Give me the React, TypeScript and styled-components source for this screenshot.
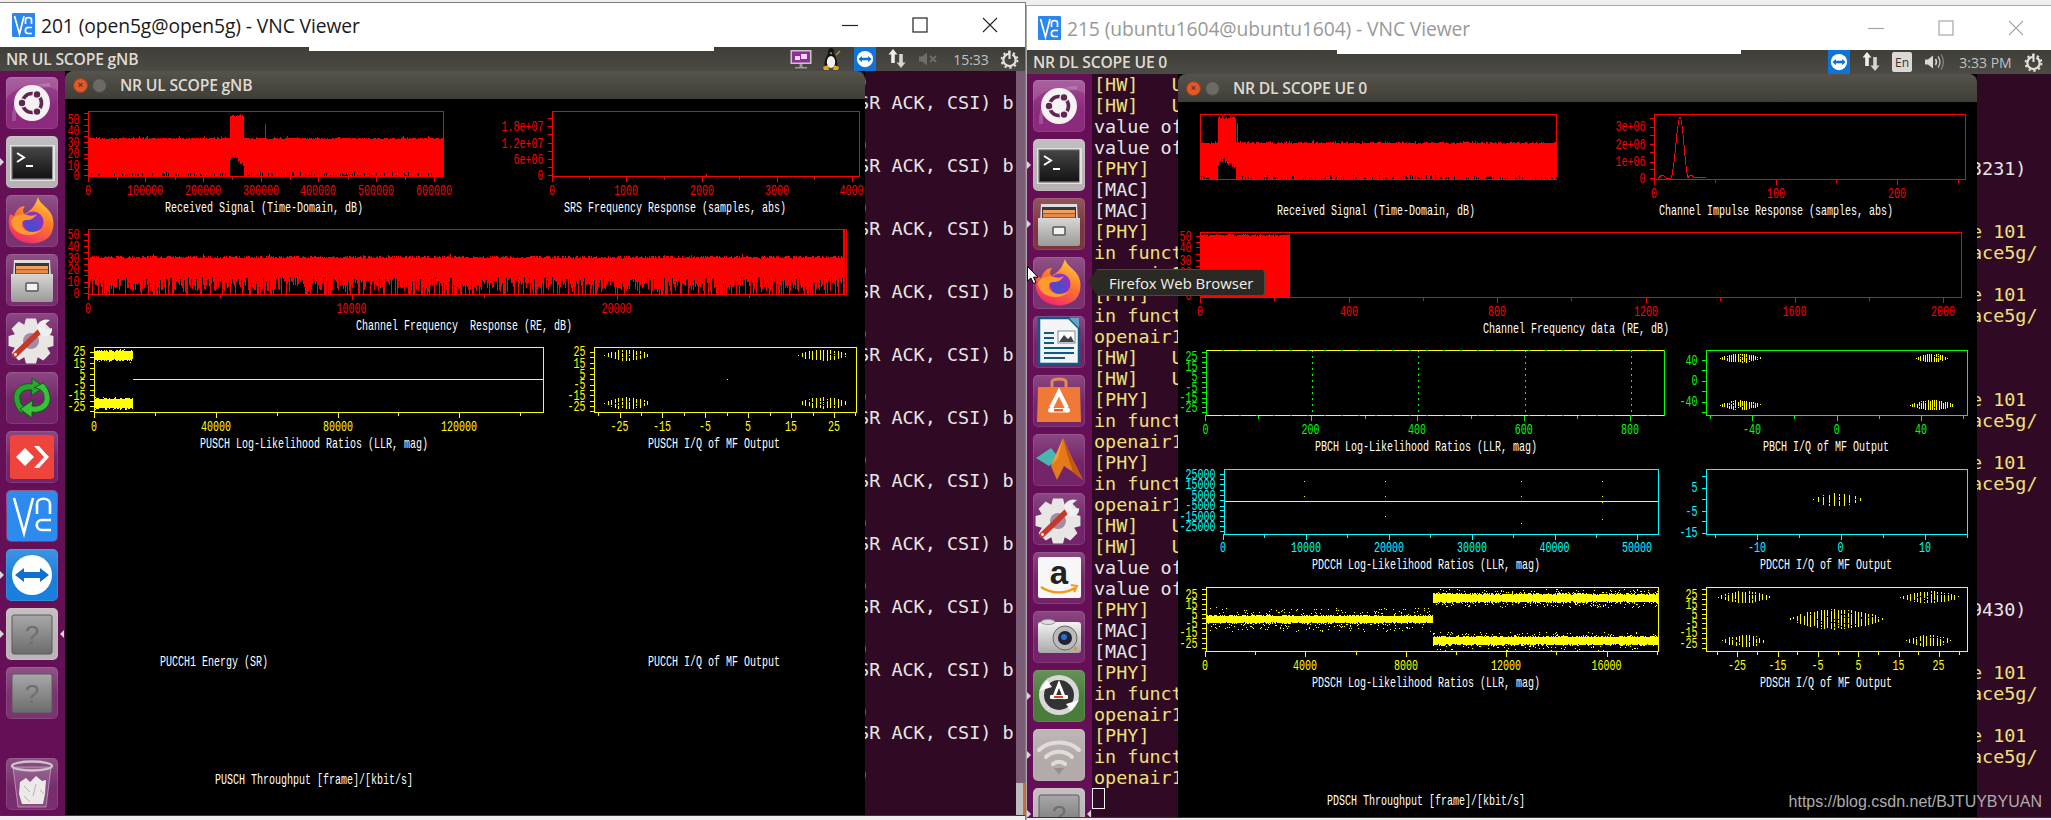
import React from "react";
import styled, { createGlobalStyle } from "styled-components";

const Global = createGlobalStyle`
  html, body { margin: 0; padding: 0; width: 2051px; height: 820px; overflow: hidden; background: #efefef; }
  #root { width: 2051px; height: 820px; }
`;

/* ---------- page chrome ---------- */
const Desktop = styled.div`display: flex; width: 2051px; height: 820px; overflow: hidden; background: #efefef;`;
const VncWindow = styled.section<{ $w: number; $top: number }>`
  flex: 0 0 ${p => p.$w}px; height: 820px; box-sizing: border-box; padding-top: ${p => p.$top}px;
  display: flex; flex-direction: column;
`;
const WindowFrame = styled.div<{ $line: string; $side: string }>`
  display: flex; flex-direction: column; flex: 1; min-height: 0;
  border-top: 1px solid ${p => p.$line};
  ${p => p.$side}: 1px solid ${p => p.$line};
`;
const TitleBar = styled.header<{ $pad: number }>`
  height: 44px; flex: none; display: flex; align-items: center; background: #fff; padding-left: ${p => p.$pad}px; box-sizing: border-box;
`;
const VncLogoBox = styled.div`
  width: 23px; height: 24px; flex: none; background: #2b86ee; border-radius: 1px;
`;
const TitleText = styled.span<{ $c: string }>`
  margin-left: 6px; font: 400 19.3px "Open Sans", "Noto Sans", sans-serif; color: ${p => p.$c}; white-space: pre; letter-spacing: -0.1px;
`;
const Controls = styled.div`margin-left: auto; display: flex;`;
const CaptionBtn = styled.div`width: 70px; height: 44px; display: flex; align-items: center; justify-content: center;`;

const Panel = styled.div`
  position: relative; height: 24px; flex: none; display: flex; align-items: center;
  background: linear-gradient(#3f3e39, #4b4a44); padding-left: 6px; box-sizing: border-box;
`;
const PanelStub = styled.div<{ $l: number; $w: number }>`
  position: absolute; top: 0; left: ${p => p.$l}px; width: ${p => p.$w}px; height: 4px; background: #fff;
`;
const AppName = styled.span`
  font: 600 15.7px "Open Sans", "Noto Sans", sans-serif; color: #dfdbd2; white-space: pre; letter-spacing: -0.2px;
`;
const Tray = styled.div<{ $r: number }>`
  margin-left: auto; padding-right: ${p => p.$r}px; display: flex; align-items: center; height: 24px;
`;
const TrayItem = styled.div<{ $w: number; $ml: number }>`
  width: ${p => p.$w}px; margin-left: ${p => p.$ml}px; height: 24px; flex: none; display: flex; align-items: center; justify-content: center;
`;
const Clock = styled.span`
  font: 400 14px "Open Sans", "Noto Sans", sans-serif; color: #bcc3c8; white-space: pre;
`;

const Viewport = styled.div`position: relative; flex: 1; min-height: 0; display: flex; overflow: hidden;`;
const Launcher = styled.nav`
  flex: 0 0 65px; box-sizing: border-box; display: flex; flex-direction: column; gap: 7px;
  padding: 6px 0 5px 6px; background: #650f57; overflow: hidden;
`;
const Tile = styled.div<{ $bg: string; $pl?: boolean; $pr?: boolean; $end?: boolean }>`
  position: relative; flex: none; width: 52px; height: 52px; border-radius: 5px; box-sizing: border-box;
  background: linear-gradient(rgba(255,255,255,.16), rgba(255,255,255,0) 55%), ${p => p.$bg};
  box-shadow: inset 0 0 0 1px rgba(255,255,255,.10);
  ${p => (p.$end ? "margin-top: auto;" : "")}
  ${p => (p.$pl ? `&::before { content: ""; position: absolute; left: -6px; top: 22px; border: 4px solid transparent; border-left: 4px solid #d8d4d8; border-right: 0; }` : "")}
  ${p => (p.$pr ? `&::after { content: ""; position: absolute; right: -6px; top: 22px; border: 4px solid transparent; border-right: 4px solid #d8d4d8; border-left: 0; }` : "")}
`;
const IconSvg = styled.svg`display: block; width: 52px; height: 52px;`;

const Terminal = styled.div<{ $pl: number }>`
  flex: 1; min-width: 0; background: #300a24; overflow: hidden; box-sizing: border-box;
  padding: 0 0 0 ${p => p.$pl}px; font: 400 18.44px/21px "DejaVu Sans Mono", "Liberation Mono", monospace;
`;
const TermLine = styled.div`height: 21px; white-space: pre;`;
const TermRun = styled.span<{ $c: string }>`color: ${p => p.$c};`;
const CursorBox = styled.div`width: 13px; height: 21px; margin-left: -2px; box-sizing: border-box; border: 1px solid #f2f2f2;`;

const VScroll = styled.div`
  flex: 0 0 9px; display: flex; flex-direction: column; background: #7a5c76;
`;
const VThumb = styled.div`
  margin-top: auto; height: 32px; background: #bdbdbd; border-right: 2px solid #c8703c;
`;

const ScopeWindow = styled.article<{ $l: number; $w: number }>`
  position: absolute; left: ${p => p.$l}px; top: 0; bottom: 0; width: ${p => p.$w}px;
  display: flex; flex-direction: column; background: #000;
`;
const ScopeTitle = styled.div`
  height: 28px; flex: none; display: flex; align-items: center; box-sizing: border-box; padding-left: 8px;
  border-radius: 8px 8px 0 0; background: linear-gradient(#55534b, #3e3d37);
`;
const WinDot = styled.span<{ $bg: string }>`
  width: 15px; height: 15px; border-radius: 50%; flex: none; margin-right: 4px;
  background: ${p => p.$bg}; box-shadow: inset 0 0 0 1px rgba(0,0,0,.3);
  display: flex; align-items: center; justify-content: center;
  font: 700 9px "Liberation Sans", sans-serif; color: rgba(60,30,20,.75);
`;
const ScopeName = styled.span`
  margin-left: 9px; font: 600 15.7px "Open Sans", "Noto Sans", sans-serif; color: #dfdbd2; white-space: pre; letter-spacing: -0.2px;
`;
const ScopeBody = styled.div`flex: 1; display: flex; flex-direction: column; background: #000; overflow: hidden;`;
const PlotRow = styled.div<{ $h: number }>`display: flex; flex: none; height: ${p => p.$h}px;`;
const PlotSvg = styled.svg`display: block; flex: none; overflow: visible;`;
const PlotText = styled.text`
  font-family: "Liberation Mono", "DejaVu Sans Mono", monospace; font-size: 15px; white-space: pre;
`;

const Tooltip = styled.div`
  position: absolute; left: 70px; top: 195px; height: 27px; width: 168px; box-sizing: border-box;
  background: #2a2924; border: 1px solid #4b4a42; border-left: 0; border-radius: 0 4px 4px 0;
  display: flex; align-items: center; padding-left: 12px;
  font: 400 14.9px "Open Sans", "Noto Sans", sans-serif; color: #f4f1ea; white-space: pre;
  &::before {
    content: ""; position: absolute; left: -9px; top: -1px; border: 13.5px solid transparent;
    border-right: 9px solid #2a2924; border-left: 0;
  }
`;
const Pointer = styled.svg`position: absolute; left: 0; top: 192px; width: 12px; height: 18px;`;
const Watermark = styled.div`
  position: absolute; right: 9px; bottom: 6px; font: 400 16px "Liberation Sans", Arial, sans-serif;
  color: #adadad; white-space: pre;
`;
const BottomEdge = styled.div<{ $h: number }>`height: ${p => p.$h}px; flex: none; background: #efefef; border-top: 1px solid #4d2a47;`;

/* ---------- data helpers ---------- */
function rng(seed: number) {
  let a = seed >>> 0;
  return () => {
    a = (a + 0x6d2b79f5) >>> 0;
    let t = a;
    t = Math.imul(t ^ (t >>> 15), t | 1);
    t ^= t + Math.imul(t ^ (t >>> 7), t | 61);
    return ((t ^ (t >>> 14)) >>> 0) / 4294967296;
  };
}
type Layer = { d: string; c: string; w?: number; dash?: string };
type Tick = [string, number];
type Spec = {
  frame?: [number, number, number, number];
  color: string;
  xt?: Tick[];
  yt?: Tick[];
  xly?: number;
  layers?: Layer[];
  caption: string;
  capX: number;
  capY: number;
};

function signal(x0: number, x1: number, yb: number, base: number, bx0: number, bx1: number, btop: number, bdark: number, spike: [number, number], seed: number): Layer[] {
  const r = rng(seed);
  let red = "";
  let blk = "";
  for (let x = Math.floor(x0) + 1; x < x1; x++) {
    const burst = x >= bx0 && x < bx1;
    let top = burst ? btop + r() * 3 : base + r() * 1.6 - (r() < 0.06 ? 1.6 : 0);
    if (x === spike[0]) top = spike[1];
    red += `M${x + 0.5} ${top.toFixed(1)}V${yb}`;
    if (burst) {
      const u = (x - bx0) / (bx1 - bx0);
      const peak = bdark + Math.abs(u - 0.3) * 12 + r() * 5;
      blk += `M${x + 0.5} ${peak.toFixed(1)}V${yb}`;
    } else if (r() < 0.28) {
      blk += `M${x + 0.5} ${yb - 1 - r() * 3}V${yb}`;
    }
  }
  return [{ d: red, c: "#f00" }, { d: blk, c: "#000" }];
}
function chanResp(): Layer[] {
  const r = rng(7);
  let d = "";
  for (let x = 89; x < 843; x++) {
    const top = 258.5 - r() * 3 - (r() < 0.03 ? 2.5 : 0);
    const bot = r() < 0.2 ? 294 : 277 + r() * 15;
    d += `M${x + 0.5} ${top.toFixed(1)}V${bot.toFixed(1)}`;
  }
  return [{ d, c: "#f00" }, { d: "M843.5 229V294M844.5 229V294", c: "#f00" }];
}
function dlFill(): string {
  const r = rng(31);
  let d = "";
  for (let x = 1201; x < 1290; x++) d += `M${x + 0.5} ${(234 + r() * 1.6).toFixed(1)}V297`;
  return d;
}
function band(x0: number, x1: number, cy: number, amp: number, spray: number, seed: number): string {
  const r = rng(seed);
  let d = "";
  for (let x = x0; x < x1; x++) {
    const a = amp * (0.75 + r() * 0.35);
    d += `M${x + 0.5} ${(cy - a).toFixed(1)}V${(cy + a).toFixed(1)}`;
    for (let k = 0; k < 3; k++) {
      const u = (r() - 0.5) * 2;
      const y = Math.round(cy + u * Math.abs(u) * spray);
      if (r() < 0.75) d += `M${x + 0.5} ${y}v1`;
    }
  }
  return d;
}
function cluster(cx: number, cy: number, rx: number, ry: number, step: number, seed: number): string {
  const r = rng(seed);
  let d = "";
  for (let x = cx - rx; x <= cx + rx; x += step) {
    const u = (x - cx) / rx;
    const h = ry * (1 - u * u * 0.92) * (0.82 + r() * 0.18);
    const px = Math.round(x) + 0.5;
    for (let y = Math.round(cy - h); y <= cy + h; y++) if (r() < 0.9) d += `M${px} ${y}v1`;
  }
  return d;
}
function dots(list: [number, number][]): string {
  return list.map(([x, y]) => `M${x + 0.5} ${y}v1`).join("");
}
const Y = "#ffff00";

/* ---------- plot specs (page coordinates) ---------- */
const yUL: Tick[] = [["25", 351.6], ["15", 363], ["5", 374], ["-5", 384.5], ["-15", 395], ["-25", 406]];
const leftRows: { h: number; cells: { w: number; spec: Spec }[] }[] = [
  {
    h: 119,
    cells: [
      {
        w: 425,
        spec: {
          frame: [88.5, 111, 443.5, 176], color: "#f00", xly: 190.6, caption: "Received Signal (Time-Domain, dB)", capX: 264, capY: 208,
          xt: [["0", 88], ["100000", 145], ["200000", 203], ["300000", 261], ["400000", 318], ["500000", 376], ["600000", 434]],
          yt: [["50", 119], ["40", 130.6], ["30", 142], ["20", 153.5], ["10", 165], ["0", 175]],
          layers: signal(88.5, 443.5, 176, 137.4, 230, 244, 114, 154, [265, 124], 3),
        },
      },
      {
        w: 375,
        spec: {
          frame: [552.5, 111, 859.5, 176], color: "#f00", xly: 190.6, caption: "SRS Frequency Response (samples, abs)", capX: 675, capY: 208,
          xt: [["0", 552], ["1000", 626], ["2000", 702], ["3000", 777], ["4000", 851.5]],
          yt: [["1.8e+07", 126], ["1.2e+07", 143], ["6e+06", 159], ["0", 175]],
          layers: [{ d: dots([[706, 174], [706, 175], [553, 174]]), c: "#f00" }],
        },
      },
    ],
  },
  {
    h: 118,
    cells: [
      {
        w: 800,
        spec: {
          frame: [88.5, 229, 846.5, 294], color: "#f00", xly: 308.7, caption: "Channel Frequency  Response (RE, dB)", capX: 464, capY: 326,
          xt: [["0", 88], ["10000", 351.5], ["20000", 616.5]],
          yt: [["50", 234], ["40", 246], ["30", 258], ["20", 269.5], ["10", 281.5], ["0", 293]],
          layers: chanResp(),
        },
      },
    ],
  },
  {
    h: 118,
    cells: [
      {
        w: 495,
        spec: {
          frame: [94.5, 347, 543.5, 412], color: Y, xly: 426.7, caption: "PUSCH Log-Likelihood Ratios (LLR, mag)", capX: 314, capY: 444,
          xt: [["0", 94], ["40000", 216], ["80000", 338], ["120000", 459]],
          yt: yUL,
          layers: [{ d: band(95, 133, 355.5, 5.2, 6.5, 11) + band(95, 133, 403.5, 5.2, 6.5, 12) + "M133 379.5H543", c: Y }],
        },
      },
      {
        w: 305,
        spec: {
          frame: [594.5, 347, 856.5, 412], color: Y, xly: 426.7, caption: "PUSCH I/Q of MF Output", capX: 714, capY: 444,
          xt: [["-25", 619.6], ["-15", 662], ["-5", 705], ["5", 748], ["15", 791], ["25", 834]],
          yt: yUL,
          layers: [{
            d: cluster(627, 355, 23, 6, 3.6, 21) + cluster(823, 355, 25, 6, 3.6, 22) + cluster(627, 403, 23, 6, 3.6, 23) + cluster(823, 403, 25, 6, 3.6, 24) + dots([[727, 379]]),
            c: Y,
          }],
        },
      },
    ],
  },
  {
    h: 218,
    cells: [
      { w: 425, spec: { color: "#fff", caption: "PUCCH1 Energy (SR)", capX: 214, capY: 662 } },
      { w: 375, spec: { color: "#fff", caption: "PUCCH I/Q of MF Output", capX: 714, capY: 662 } },
    ],
  },
  { h: 118, cells: [{ w: 800, spec: { color: "#fff", caption: "PUSCH Throughput [frame]/[kbit/s]", capX: 314, capY: 780 } }] },
];

const GREEN = "#00ff00";
const CYAN = "#00ffff";
const yDL: Tick[] = [["25", 594], ["15", 604], ["5", 614], ["-5", 623], ["-15", 632.7], ["-25", 643]];
const rightRows: typeof leftRows = [
  {
    h: 119,
    cells: [
      {
        w: 382,
        spec: {
          frame: [1200.5, 114, 1556.5, 179], color: "#f00", caption: "Received Signal (Time-Domain, dB)", capX: 1376, capY: 211,
          layers: signal(1200.5, 1556.5, 179, 142, 1218, 1236, 116, 157, [1237, 123], 5),
        },
      },
      {
        w: 417,
        spec: {
          frame: [1654.5, 114, 1965.5, 179], color: "#f00", xly: 193.5, caption: "Channel Impulse Response (samples, abs)", capX: 1776, capY: 211,
          xt: [["0", 1654], ["100", 1776], ["200", 1897]],
          yt: [["3e+06", 126.7], ["2e+06", 144], ["1e+06", 161.7], ["0", 178]],
          layers: [{ d: "M1658 179C1661 174 1663 174 1666 178L1671 178C1675 170 1677 117 1680 117C1683 117 1685 170 1688 178C1690 174 1692 175 1695 178L1700 177L1706 178", c: "#f00" }],
        },
      },
    ],
  },
  {
    h: 118,
    cells: [
      {
        w: 799,
        spec: {
          frame: [1200.5, 232, 1961.5, 297], color: "#f00", xly: 311.7, caption: "Channel Frequency data (RE, dB)", capX: 1576, capY: 329,
          xt: [["0", 1200], ["400", 1349], ["800", 1497], ["1200", 1646], ["1600", 1794.6], ["2000", 1943]],
          yt: [["50", 236], ["40", 247], ["30", 260], ["20", 272], ["10", 284], ["0", 295]],
          layers: [{ d: dlFill() + "M1200 297H1962", c: "#f00" }],
        },
      },
    ],
  },
  {
    h: 118,
    cells: [
      {
        w: 494,
        spec: {
          frame: [1206.5, 350, 1664.5, 415], color: GREEN, xly: 429, caption: "PBCH Log-Likelihood Ratios (LLR, mag)", capX: 1426, capY: 447,
          xt: [["0", 1205.4], ["200", 1310.6], ["400", 1417], ["600", 1523.7], ["800", 1630]],
          yt: [["25", 356.7], ["15", 366.7], ["5", 376.7], ["-5", 387], ["-15", 397.7], ["-25", 407]],
          layers: [
            { d: "M1312.5 350V415M1418.5 350V415M1525.5 350V415M1631.5 350V415", c: GREEN, dash: "2 4" },
            { d: "M1207 350.5H1664M1207 415.5H1664", c: Y, dash: "15 2" },
          ],
        },
      },
      {
        w: 305,
        spec: {
          frame: [1706.5, 350, 1967.5, 415], color: GREEN, xly: 429, caption: "PBCH I/Q of MF Output", capX: 1826, capY: 447,
          xt: [["-40", 1752], ["0", 1836.7], ["40", 1921]],
          yt: [["40", 360], ["0", 380.7], ["-40", 401.7]],
          layers: [{ d: cluster(1740, 358, 20, 4.5, 2.2, 41) + cluster(1932, 358, 16, 4.5, 2.2, 42) + cluster(1740, 405, 20, 5, 2.2, 43) + cluster(1932, 405, 22, 5, 2.2, 44), c: Y }],
        },
      },
    ],
  },
  {
    h: 118,
    cells: [
      {
        w: 494,
        spec: {
          frame: [1224.5, 469, 1658.5, 534], color: CYAN, xly: 547.7, caption: "PDCCH Log-Likelihood Ratios (LLR, mag)", capX: 1426, capY: 564.7,
          xt: [["0", 1223], ["10000", 1306], ["20000", 1389], ["30000", 1472], ["40000", 1554.6], ["50000", 1637]],
          yt: [["25000", 474], ["15000", 484], ["5000", 495], ["-5000", 505.7], ["-15000", 516], ["-25000", 526]],
          layers: [{
            d: "M1225 501.5H1658" + dots([[1304, 481], [1304, 496], [1385, 481], [1385, 496], [1385, 516], [1521, 481], [1521, 496], [1521, 523], [1602, 481], [1602, 496], [1602, 519], [1602, 502]]),
            c: Y,
          }],
        },
      },
      {
        w: 305,
        spec: {
          frame: [1706.5, 469, 1967.5, 534], color: CYAN, xly: 547.7, caption: "PDCCH I/Q of MF Output", capX: 1826, capY: 564.7,
          xt: [["-10", 1757], ["0", 1840.6], ["10", 1925]],
          yt: [["5", 487.7], ["-5", 511], ["-15", 532.7]],
          layers: [{ d: cluster(1837, 499.5, 24, 7, 5.2, 51), c: Y }],
        },
      },
    ],
  },
  {
    h: 118,
    cells: [
      {
        w: 494,
        spec: {
          frame: [1206.5, 587, 1658.5, 651], color: Y, xly: 665.7, caption: "PDSCH Log-Likelihood Ratios (LLR, mag)", capX: 1426, capY: 683,
          xt: [["0", 1205], ["4000", 1305], ["8000", 1406], ["12000", 1506], ["16000", 1606.5]],
          yt: yDL,
          layers: [{ d: band(1207, 1433, 619.3, 4, 12, 61) + band(1433, 1658, 598, 4.5, 9, 62) + band(1433, 1658, 640.7, 4.5, 9, 63), c: Y }],
        },
      },
      {
        w: 305,
        spec: {
          frame: [1706.5, 587, 1967.5, 651], color: Y, xly: 665.7, caption: "PDSCH I/Q of MF Output", capX: 1826, capY: 683,
          xt: [["-25", 1737], ["-15", 1777.5], ["-5", 1817.6], ["5", 1858.4], ["15", 1898.5], ["25", 1938.6]],
          yt: yDL,
          layers: [{
            d: cluster(1744, 597, 26, 6, 3.4, 71) + cluster(1930, 597, 30, 6, 3.4, 72) + cluster(1744, 640.7, 22, 6, 3.4, 73) + cluster(1929, 640.7, 23, 6, 3.4, 74) + cluster(1836, 619, 46, 11, 3.4, 75),
            c: Y,
          }],
        },
      },
    ],
  },
  { h: 118, cells: [{ w: 799, spec: { color: "#fff", caption: "PDSCH Throughput [frame]/[kbit/s]", capX: 1426, capY: 801 } }] },
];

/* ---------- plot ---------- */
function minorTicks(vals: number[], lo: number, hi: number): number[] {
  if (vals.length < 2) return [];
  const sorted = [...vals].sort((a, b) => a - b);
  const step = (sorted[sorted.length - 1] - sorted[0]) / (sorted.length - 1);
  const out: number[] = [];
  for (let v = sorted[0] - step / 2; v < hi; v += step) if (v > lo) out.push(v);
  return out;
}
function Plot({ spec, x, y, w, h }: { spec: Spec; x: number; y: number; w: number; h: number }) {
  const { frame, color, xt, yt, xly, layers, caption, capX, capY } = spec;
  let axis = "";
  if (frame) {
    const [x0, y0, x1, y1] = frame;
    (xt || []).forEach(([, v]) => { axis += `M${Math.round(v) + 0.5} ${y1}v6`; });
    minorTicks((xt || []).map(t => t[1]), x0, x1).forEach(v => { axis += `M${Math.round(v) + 0.5} ${y1}v4`; });
    (yt || []).forEach(([, v]) => { axis += `M${x0} ${Math.round(v) + 0.5}h-5`; });
    minorTicks((yt || []).map(t => t[1]), y0, y1).forEach(v => { axis += `M${x0} ${Math.round(v) + 0.5}h-5`; });
  }
  return (
    <PlotSvg width={w} height={h} viewBox={`${x} ${y} ${w} ${h}`}>
      {frame && (
        <>
          <rect x={frame[0]} y={frame[1] + 0.5} width={frame[2] - frame[0]} height={frame[3] - frame[1]} fill="none" stroke={color} shapeRendering="crispEdges" />
          <path d={axis} stroke={color} fill="none" shapeRendering="crispEdges" />
        </>
      )}
      {(layers || []).map((l, i) => (
        <path key={i} d={l.d} stroke={l.c} strokeWidth={l.w || 1} strokeDasharray={l.dash} fill="none" shapeRendering="crispEdges" />
      ))}
      {frame && (xt || []).map(([l, v]) => (
        <PlotText key={"x" + l} x={v} y={(xly || 0) + 4.5} fill={color} textAnchor="middle" textLength={l.length * 6} lengthAdjust="spacingAndGlyphs">{l}</PlotText>
      ))}
      {frame && (yt || []).map(([l, v]) => (
        <PlotText key={"y" + l} x={frame[0] - 9} y={v + 4.5} fill={color} textAnchor="end" textLength={l.length * 6} lengthAdjust="spacingAndGlyphs">{l}</PlotText>
      ))}
      <PlotText x={capX} y={capY + 4} fill="#fff" textAnchor="middle" textLength={caption.length * 6} lengthAdjust="spacingAndGlyphs">{caption}</PlotText>
    </PlotSvg>
  );
}
function ScopeRows({ x0, y0, rows }: { x0: number; y0: number; rows: typeof leftRows }) {
  let y = y0;
  return (
    <ScopeBody>
      {rows.map((row, i) => {
        let x = x0;
        const ry = y;
        y += row.h;
        return (
          <PlotRow key={i} $h={row.h}>
            {row.cells.map((c, j) => {
              const cx = x;
              x += c.w;
              return <Plot key={j} spec={c.spec} x={cx} y={ry} w={c.w} h={row.h} />;
            })}
          </PlotRow>
        );
      })}
    </ScopeBody>
  );
}

/* ---------- icons ---------- */
function gear(cx: number, cy: number, R: number, r: number, n: number): string {
  const pts: string[] = [];
  for (let i = 0; i < n; i++) {
    const a = (i / n) * Math.PI * 2;
    const s = (Math.PI * 2) / n;
    [[r, -0.5], [R, -0.28], [R, 0.28], [r, 0.5]].forEach(([rad, o]) => {
      const t = a + o * s;
      pts.push(`${(cx + rad * Math.cos(t)).toFixed(2)} ${(cy + rad * Math.sin(t)).toFixed(2)}`);
    });
  }
  return "M" + pts.join("L") + "Z";
}
const VncLogo = () => (
  <VncLogoBox>
    <svg width="23" height="24" viewBox="0 0 23 24" fill="none" stroke="#fff" strokeWidth="1.7">
      <path d="M2.5 3L7.5 21L12 3" />
      <path d="M13.5 11V6.5C13.5 4 19.5 4 19.5 6.5V11" />
      <path d="M20 14.5H16C12.5 14.5 12.5 20.5 16 20.5H20" />
    </svg>
  </VncLogoBox>
);
const CapMin = ({ c }: { c: string }) => <svg width="16" height="16" stroke={c} strokeWidth="1.2"><path d="M0 8.5H16" /></svg>;
const CapMax = ({ c }: { c: string }) => <svg width="16" height="16" fill="none" stroke={c} strokeWidth="1.2"><rect x="1" y="1" width="14" height="14" /></svg>;
const CapClose = ({ c }: { c: string }) => <svg width="16" height="16" stroke={c} strokeWidth="1.1"><path d="M1 1L15 15M15 1L1 15" /></svg>;

const TvGlyph = ({ s }: { s: number }) => (
  <svg width={s} height={s} viewBox="0 0 32 32">
    <circle cx="16" cy="16" r="13" fill="#fff" />
    <path d="M5.5 16L11 11V14H21V11L26.5 16L21 21V18H11V21Z" fill="#0e6fd0" />
  </svg>
);
const TrayTv = styled.div`width: 22px; height: 24px; background: #0f74d6; display: flex; align-items: center; justify-content: center;`;
const EnBadge = styled.div`
  width: 20px; height: 20px; background: #dcd9d4; border-radius: 2px; display: flex; align-items: center; justify-content: center;
  font: 400 12px "Open Sans", sans-serif; color: #333;
`;
const Monitor = () => (
  <svg width="22" height="22" viewBox="0 0 22 22">
    <rect x="0.5" y="2" width="21" height="14" fill="#c9c7c4" />
    <rect x="2" y="3.5" width="18" height="11" fill="#8f2f9a" />
    <rect x="5" y="8" width="5" height="4" fill="#f4d7f0" /><rect x="11" y="6" width="6" height="5" fill="#f4d7f0" />
    <rect x="9.5" y="16" width="3" height="3" fill="#9c9a98" /><rect x="5" y="19" width="12" height="1.5" fill="#9c9a98" />
  </svg>
);
const Tux = () => (
  <svg width="20" height="24" viewBox="0 0 20 24">
    <path d="M10 1C7 1 7 5 7 7C4 11 3 16 4 19H16C17 16 15 10 13 7C13 4 13 1 10 1Z" fill="#111" />
    <ellipse cx="10" cy="15" rx="4.2" ry="6" fill="#f1f1ea" />
    <path d="M8.5 5.5H11.5L10 7.5Z" fill="#e8a317" />
    <path d="M2 20L7 18L8 23H3ZM18 20L13 18L12 23H17Z" fill="#e8a317" />
    <path d="M15 8L19 4" stroke="#c48c3c" strokeWidth="1.4" />
  </svg>
);
const Arrows = () => (
  <svg width="18" height="22" viewBox="0 0 18 22" fill="#f1efe9">
    <path d="M5 1L9.5 6.5H6.8V15H3.2V6.5H.5Z" />
    <path d="M13 20L8.5 14.5H11.2V6H14.8V14.5H17.5Z" fill="#d6d4ce" />
  </svg>
);
const Mute = () => (
  <svg width="19" height="14" viewBox="0 0 19 14" fill="#6f6e69">
    <path d="M0 4.5H3L8 .5V13.5L3 9.5H0Z" />
    <path d="M11 4L17 10M17 4L11 10" stroke="#6f6e69" strokeWidth="1.8" />
  </svg>
);
const Sound = () => (
  <svg width="20" height="18" viewBox="0 0 20 18" fill="none">
    <path d="M0 6.5H3L8 2.5V15.5L3 11.5H0Z" fill="#dbd9d3" />
    <path d="M10.5 6C11.8 8 11.8 10 10.5 12" stroke="#dbd9d3" strokeWidth="1.5" />
    <path d="M13 3.5C15.5 7 15.5 11 13 14.5" stroke="#c9c7c1" strokeWidth="1.3" />
    <path d="M16 1.5C19.2 6 19.2 12 16 16.5" stroke="#8c8b86" strokeWidth="1.2" />
  </svg>
);
const PowerGear = () => (
  <svg width="19" height="20" viewBox="0 0 20 20" fill="none" stroke="#e4e1da">
    <circle cx="10" cy="11" r="6.5" strokeWidth="2.4" strokeDasharray="30 3" />
    <circle cx="10" cy="11" r="8.4" strokeWidth="2" strokeDasharray="2.4 3" />
    <path d="M10 1V10" strokeWidth="2.2" />
  </svg>
);

const UbuntuIcon = () => (
  <IconSvg viewBox="0 0 52 52">
    <path d="M0 22C14 4 38 6 52 14V4C52 2 50 0 48 0H4C2 0 0 2 0 4Z" fill="rgba(255,255,255,.12)" />
    <path d="M8 44C6 24 22 8 44 8" stroke="rgba(255,255,255,.18)" strokeWidth="4" fill="none" />
    <circle cx="26" cy="26" r="18" fill="#f6f2f4" />
    <circle cx="26" cy="26" r="9.5" fill="none" stroke="#5e2750" strokeWidth="3.6" />
    <circle cx="16" cy="26" r="4.6" fill="#f6f2f4" /><circle cx="31" cy="17.4" r="4.6" fill="#f6f2f4" /><circle cx="31" cy="34.6" r="4.6" fill="#f6f2f4" />
    <circle cx="16" cy="26" r="3.2" fill="#5e2750" /><circle cx="31" cy="17.4" r="3.2" fill="#5e2750" /><circle cx="31" cy="34.6" r="3.2" fill="#5e2750" />
  </IconSvg>
);
const TerminalIcon = () => (
  <IconSvg viewBox="0 0 52 52">
    <rect x="4" y="9" width="45" height="36" fill="#e2e2e2" />
    <rect x="5.5" y="10.5" width="41" height="33" fill="#555" />
    <defs><linearGradient id="tg" x1="0" y1="0" x2="0" y2="1"><stop offset="0" stopColor="#444" /><stop offset="1" stopColor="#141414" /></linearGradient></defs>
    <rect x="7" y="12" width="39" height="30" fill="url(#tg)" />
    <path d="M11 17L18 21.5L11 26" stroke="#fff" strokeWidth="2" fill="none" />
    <path d="M20 30H27" stroke="#fff" strokeWidth="2" />
  </IconSvg>
);
const FirefoxIcon = () => (
  <IconSvg viewBox="0 0 52 52">
    <defs>
      <linearGradient id="ffa" x1=".8" y1="0" x2=".3" y2="1"><stop offset="0" stopColor="#ffd13d" /><stop offset=".45" stopColor="#ff7a2a" /><stop offset="1" stopColor="#f0286e" /></linearGradient>
      <radialGradient id="ffb" cx=".4" cy=".7" r=".8"><stop offset="0" stopColor="#3f4fd0" /><stop offset="1" stopColor="#a02cc0" /></radialGradient>
    </defs>
    <path d="M32 2C33 8 40 11 44 17C49 24 49 36 42 43C34 50 20 50 11 44C3 38 1 28 4 19L8 21C10 15 14 11 19 11C16 15 17 18 19 19C22 16 28 15 32 2Z" fill="url(#ffa)" />
    <circle cx="27" cy="27" r="10.5" fill="url(#ffb)" />
    <path d="M5 26C8 20 14 18 21 20C25 21 28 21 31 19C28 24 24 25 20 25C16 25 14 30 18 34C22 38 30 38 36 34C30 42 16 42 9 35C6 32 5 29 5 26Z" fill="#ff9a2e" />
  </IconSvg>
);
const CabinetIcon = () => (
  <IconSvg viewBox="0 0 52 52">
    <defs><linearGradient id="cg" x1="0" y1="0" x2="0" y2="1"><stop offset="0" stopColor="#d7d7d5" /><stop offset="1" stopColor="#9a9a98" /></linearGradient></defs>
    <path d="M8 6H44L46 44H6Z" fill="#dedede" />
    <rect x="9" y="9" width="34" height="12" fill="#3a3836" />
    <rect x="10" y="12" width="32" height="3" fill="#f0a060" /><rect x="10" y="15.5" width="32" height="4" fill="#e58a48" />
    <path d="M5 20H47V46C47 47 46 48 45 48H7C6 48 5 47 5 46Z" fill="url(#cg)" />
    <rect x="20" y="29" width="12" height="8" rx="1" fill="#f2f2f2" stroke="#555" strokeWidth="1.5" />
  </IconSvg>
);
const SettingsIcon = () => (
  <IconSvg viewBox="0 0 52 52">
    <path d={gear(25, 28, 23, 17.5, 8)} fill="#e8e6e5" />
    <circle cx="25" cy="28" r="8" fill="#a58aa2" />
    <path d="M9 42L35 17" stroke="#c5392a" strokeWidth="5.5" strokeLinecap="round" />
    <path d="M31 15C31 9 37 5 44 7L38 12L40 17L46 15C47 21 41 26 35 22Z" fill="#f0f0f0" />
    <circle cx="9.5" cy="41.5" r="1.4" fill="#fff" />
  </IconSvg>
);
const RefreshIcon = () => (
  <IconSvg viewBox="0 0 52 52">
    <path d="M8 28C6 16 18 10 26 12L26 6L38 15L25 24L26 18C18 17 13 21 14 27C14 34 20 36 24 36L15 41C11 38 9 33 8 28Z" fill="#2aa72e" stroke="#0d5a12" strokeWidth="1" />
    <path d="M44 24C46 36 34 42 26 40L26 46L14 37L27 28L26 34C34 35 39 31 38 25C38 18 32 16 28 16L37 11C41 14 43 19 44 24Z" fill="#37c23a" stroke="#0d5a12" strokeWidth="1" />
  </IconSvg>
);
const AnyIcon = () => (
  <IconSvg viewBox="0 0 52 52">
    <rect x="4" y="4" width="44" height="44" rx="3" fill="#ef443b" />
    <path d="M10 26L19 17L28 26L19 35Z" fill="#fff" />
    <path d="M28 15L38 26L28 37L33 37L43 26L33 15Z" fill="#fff" />
  </IconSvg>
);
const VncIcon = () => (
  <IconSvg viewBox="0 0 52 52">
    <rect x="1" y="1" width="50" height="50" rx="4" fill="#2d8bf0" />
    <g fill="none" stroke="#fff" strokeWidth="2.6">
      <path d="M8 8L18 43L27 8" /><path d="M31 24V14C31 7 44 7 44 14V24" /><path d="M45 30H36C29 30 29 40 36 40H45" />
    </g>
  </IconSvg>
);
const TvIcon = () => (
  <IconSvg viewBox="0 0 52 52">
    <circle cx="26" cy="26" r="20" fill="#fff" />
    <path d="M9 26L18 19V23H34V19L43 26L34 33V29H18V33Z" fill="#0e6fd0" />
  </IconSvg>
);
const QText = styled.text`font: 400 26px "Liberation Sans", sans-serif; fill: #6e6e6e;`;
const QuestionIcon = () => (
  <IconSvg viewBox="0 0 52 52">
    <defs><linearGradient id="qg" x1="0" y1="0" x2="0" y2="1"><stop offset="0" stopColor="#a8a8a8" /><stop offset="1" stopColor="#6c6c6c" /></linearGradient></defs>
    <rect x="6" y="7" width="40" height="39" rx="2" fill="url(#qg)" stroke="#5a5a5a" />
    <QText x="26" y="36" textAnchor="middle">?</QText>
  </IconSvg>
);
const TrashIcon = () => (
  <IconSvg viewBox="0 0 52 52">
    <path d="M7 9L12 49H40L45 9Z" fill="rgba(255,255,255,.14)" stroke="rgba(255,255,255,.4)" />
    <ellipse cx="26" cy="8" rx="20" ry="4.5" fill="none" stroke="#c9c6c8" strokeWidth="2.4" />
    <path d="M14 24L20 20L24 24L30 18L36 23L40 22L39 36L37 46H16L13 36Z" fill="#eceae9" />
    <path d="M18 28L24 34M30 26L27 38M34 32L38 36M18 38L24 44" stroke="#b5b2b2" fill="none" />
  </IconSvg>
);
const WriterIcon = () => (
  <IconSvg viewBox="0 0 52 52">
    <path d="M6 2H36L46 12V48H6Z" fill="#f4f4f4" stroke="#0d5a82" strokeWidth="2.5" />
    <path d="M36 2H46V12Z" fill="#5fa6c8" />
    <rect x="25" y="15" width="17" height="12" fill="#fff" stroke="#789" /><path d="M26 26L31 19L35 23L38 20L41 26Z" fill="#444" />
    <path d="M11 17H21M11 22H21M11 27H21M11 32H41M11 37H41M11 42H32" stroke="#0d5a82" strokeWidth="2.2" />
  </IconSvg>
);
const StoreIcon = () => (
  <IconSvg viewBox="0 0 52 52">
    <path d="M19 14V7C19 3 33 3 33 7V14" fill="none" stroke="#e08a58" strokeWidth="3" />
    <path d="M5 12H47L48 47H4Z" fill="#ef7a36" />
    <path d="M18 33L26 17L34 33" fill="none" stroke="#fff" strokeWidth="4" />
    <rect x="15" y="33" width="22" height="4.5" rx="2" fill="#fff" /><rect x="21" y="34" width="9" height="2.4" fill="#ef5a20" />
  </IconSvg>
);
const MatlabIcon = () => (
  <IconSvg viewBox="0 0 52 52">
    <path d="M3 24L18 14L26 24L16 32Z" fill="#49b7b0" />
    <path d="M18 32L30 4L38 22L50 46L40 38L31 32L24 46Z" fill="#e47a1a" />
    <path d="M30 4L38 22L50 46L40 38L34 20Z" fill="#c45810" />
    <path d="M18 32L30 4L25 24Z" fill="#f0a030" />
  </IconSvg>
);
const AzText = styled.text`font: 700 33px "Liberation Sans", sans-serif; fill: #222;`;
const AmazonIcon = () => (
  <IconSvg viewBox="0 0 52 52">
    <rect x="5" y="5" width="43" height="41" rx="2" fill="#f7f7f7" />
    <AzText x="26" y="32" textAnchor="middle">a</AzText>
    <path d="M8 35C18 42 32 42 42 36" fill="none" stroke="#f29a16" strokeWidth="2.4" />
    <path d="M38 33L44 34L41 40" fill="none" stroke="#f29a16" strokeWidth="2" />
  </IconSvg>
);
const CameraIcon = () => (
  <IconSvg viewBox="0 0 52 52">
    <defs><linearGradient id="camg" x1="0" y1="0" x2="0" y2="1"><stop offset="0" stopColor="#f2f2f2" /><stop offset="1" stopColor="#a9a9a9" /></linearGradient></defs>
    <rect x="5" y="11" width="43" height="31" rx="3" fill="url(#camg)" />
    <ellipse cx="15" cy="11" rx="7" ry="2.5" fill="#ddd" stroke="#999" />
    <circle cx="32" cy="27" r="12" fill="#bbb" stroke="#666" />
    <circle cx="32" cy="27" r="7" fill="#223" /><circle cx="31" cy="26" r="3" fill="#2a6fd0" />
    <rect x="41" y="36" width="3" height="3" fill="#e8941e" />
  </IconSvg>
);
const UpdaterIcon = () => (
  <IconSvg viewBox="0 0 52 52">
    <circle cx="26" cy="25" r="20" fill="#d8d8d8" />
    <circle cx="26" cy="25" r="15" fill="#333" />
    <path d="M6 21L14 10L19 17ZM46 30L38 41L33 34Z" fill="#fff" />
    <path d="M20 29L26 14L32 29" fill="none" stroke="#fff" strokeWidth="3" />
    <rect x="17" y="25" width="18" height="4" rx="1" fill="#fff" /><rect x="21" y="26" width="9" height="2" fill="#e0401c" />
  </IconSvg>
);
const WifiIcon = () => (
  <IconSvg viewBox="0 0 52 52" fill="none" stroke="#e0dcd8" strokeLinecap="round">
    <path d="M6 21C16 11 36 11 46 21" strokeWidth="4" />
    <path d="M13 28C20 21 32 21 39 28" strokeWidth="4" />
    <path d="M20 35C23 32 29 32 32 35" strokeWidth="4" />
    <path d="M23 40L26 44L29 40Z" fill="#938f8c" stroke="#938f8c" strokeWidth="2" />
  </IconSvg>
);

/* ---------- terminal text ---------- */
const YEL = "#efe07a";
const WHT = "#e6e6e6";
type L = [string, string, string?, string?];
const HW: L = ["[HW]   U", YEL];
const VAL: L = ["value of", WHT];
const MAC: L = ["[MAC]", WHT];
const PHY101: L = ["[PHY]", YEL, "e 101", YEL];
const FN: L = ["in funct", YEL, "ace5g/", YEL];
const OA: L = ["openair1", YEL];
const rightLines: L[] = [
  HW, HW, VAL, VAL, ["[PHY]", YEL, "3231)", WHT], MAC, MAC, PHY101, FN, OA, PHY101, FN, OA, HW, HW, PHY101, FN, OA, PHY101, FN, OA,
  HW, HW, VAL, VAL, ["[PHY]", YEL, "9430)", WHT], MAC, MAC, PHY101, FN, OA, PHY101, FN, OA,
];
const leftLines: string[] = [];
for (let i = 0; i < 35; i++) {
  const k = i % 3;
  if (k === 0) leftLines.push(" ".repeat(71) + ")");
  else if (k === 1 && i < 32) leftLines.push(" ".repeat(71) + "SR ACK, CSI) b");
  else leftLines.push("");
}

const leftTiles: [React.ReactNode, string, boolean?, boolean?][] = [
  [<UbuntuIcon />, "#8c2a7e"],
  [<TerminalIcon />, "#b8b2b5", true],
  [<FirefoxIcon />, "#7a3270"],
  [<CabinetIcon />, "#77306d"],
  [<SettingsIcon />, "#74256a"],
  [<RefreshIcon />, "#74256a"],
  [<AnyIcon />, "#74256a"],
  [<VncIcon />, "#74256a"],
  [<TvIcon />, "#1a7fdc", true],
  [<QuestionIcon />, "#bcb4b8", true, true],
  [<QuestionIcon />, "#7a3270"],
];
const rightTiles: [React.ReactNode, string, boolean?, boolean?][] = [
  [<UbuntuIcon />, "#8c2a7e"],
  [<TerminalIcon />, "#b8b2b5", true],
  [<CabinetIcon />, "#7d3640", true],
  [<FirefoxIcon />, "#7a3270"],
  [<WriterIcon />, "#74256a"],
  [<StoreIcon />, "#74256a"],
  [<MatlabIcon />, "#74256a"],
  [<SettingsIcon />, "#74256a"],
  [<AmazonIcon />, "#74256a"],
  [<CameraIcon />, "#74256a"],
  [<UpdaterIcon />, "#4a7c3a", true],
  [<WifiIcon />, "#b3aaaa", true],
  [<QuestionIcon />, "#bcb4b8", true, true],
];

export default function App() {
  return (
    <Desktop>
      <Global />
      <VncWindow $w={1026} $top={2}>
        <WindowFrame $line="#7d7d7d" $side="border-right">
          <TitleBar $pad={12}>
            <VncLogo />
            <TitleText $c="#1a1a1a">201 (open5g@open5g) - VNC Viewer</TitleText>
            <Controls>
              <CaptionBtn><CapMin c="#222" /></CaptionBtn>
              <CaptionBtn><CapMax c="#222" /></CaptionBtn>
              <CaptionBtn><CapClose c="#222" /></CaptionBtn>
            </Controls>
          </TitleBar>
          <Panel>
            <PanelStub $l={309} $w={405} />
            <AppName>NR UL SCOPE gNB</AppName>
            <Tray $r={6}>
              <TrayItem $w={22} $ml={0}><Monitor /></TrayItem>
              <TrayItem $w={20} $ml={9}><Tux /></TrayItem>
              <TrayItem $w={22} $ml={13}><TrayTv><TvGlyph s={20} /></TrayTv></TrayItem>
              <TrayItem $w={18} $ml={12}><Arrows /></TrayItem>
              <TrayItem $w={19} $ml={13}><Mute /></TrayItem>
              <TrayItem $w={34} $ml={16}><Clock>15:33</Clock></TrayItem>
              <TrayItem $w={19} $ml={12}><PowerGear /></TrayItem>
            </Tray>
          </Panel>
          <Viewport>
            <Launcher>
              {leftTiles.map(([icon, bg, pl, pr], i) => <Tile key={i} $bg={bg} $pl={pl} $pr={pr}>{icon}</Tile>)}
              <Tile $bg="#782e6e" $end><TrashIcon /></Tile>
            </Launcher>
            <Terminal $pl={5}>
              {leftLines.map((l, i) => <TermLine key={i}><TermRun $c={WHT}>{l}</TermRun></TermLine>)}
            </Terminal>
            <VScroll><VThumb /></VScroll>
            <ScopeWindow $l={65} $w={800}>
              <ScopeTitle>
                <WinDot $bg="#e0592a">×</WinDot>
                <WinDot $bg="#6b6a64" />
                <ScopeName>NR UL SCOPE gNB</ScopeName>
              </ScopeTitle>
              <ScopeRows x0={65} y0={99} rows={leftRows} />
            </ScopeWindow>
          </Viewport>
          <BottomEdge $h={4} />
        </WindowFrame>
      </VncWindow>
      <VncWindow $w={1025} $top={5}>
        <WindowFrame $line="#a9a9a9" $side="border-left">
          <TitleBar $pad={11}>
            <VncLogo />
            <TitleText $c="#999">215 (ubuntu1604@ubuntu1604) - VNC Viewer</TitleText>
            <Controls>
              <CaptionBtn><CapMin c="#a5a5a5" /></CaptionBtn>
              <CaptionBtn><CapMax c="#a5a5a5" /></CaptionBtn>
              <CaptionBtn><CapClose c="#a5a5a5" /></CaptionBtn>
            </Controls>
          </TitleBar>
          <Panel>
            <PanelStub $l={310} $w={404} />
            <AppName>NR DL SCOPE UE 0</AppName>
            <Tray $r={8}>
              <TrayItem $w={22} $ml={0}><TrayTv><TvGlyph s={20} /></TrayTv></TrayItem>
              <TrayItem $w={18} $ml={12}><Arrows /></TrayItem>
              <TrayItem $w={20} $ml={12}><EnBadge>En</EnBadge></TrayItem>
              <TrayItem $w={20} $ml={13}><Sound /></TrayItem>
              <TrayItem $w={53} $ml={14}><Clock>3:33 PM</Clock></TrayItem>
              <TrayItem $w={19} $ml={12}><PowerGear /></TrayItem>
            </Tray>
          </Panel>
          <Viewport>
            <Launcher>
              {rightTiles.map(([icon, bg, pl, pr], i) => <Tile key={i} $bg={bg} $pl={pl} $pr={pr}>{icon}</Tile>)}
            </Launcher>
            <Terminal $pl={2}>
              {rightLines.map(([a, ac, b, bc], i) => (
                <TermLine key={i}>
                  <TermRun $c={ac}>{b ? a.padEnd(79) : a}</TermRun>
                  {b && <TermRun $c={bc || YEL}>{b}</TermRun>}
                </TermLine>
              ))}
              <CursorBox />
            </Terminal>
            <ScopeWindow $l={151} $w={799}>
              <ScopeTitle>
                <WinDot $bg="#e0592a">×</WinDot>
                <WinDot $bg="#6b6a64" />
                <ScopeName>NR DL SCOPE UE 0</ScopeName>
              </ScopeTitle>
              <ScopeRows x0={1178} y0={102} rows={rightRows} />
            </ScopeWindow>
            <Tooltip>Firefox Web Browser</Tooltip>
            <Pointer viewBox="0 0 12 18"><path d="M.5 .5V15L4 12L6.5 17.5L9 16.5L6.5 11.2H11Z" fill="#fff" stroke="#000" /></Pointer>
            <Watermark>https://blog.csdn.net/BJTUYBYUAN</Watermark>
          </Viewport>
          <BottomEdge $h={2} />
        </WindowFrame>
      </VncWindow>
    </Desktop>
  );
}
